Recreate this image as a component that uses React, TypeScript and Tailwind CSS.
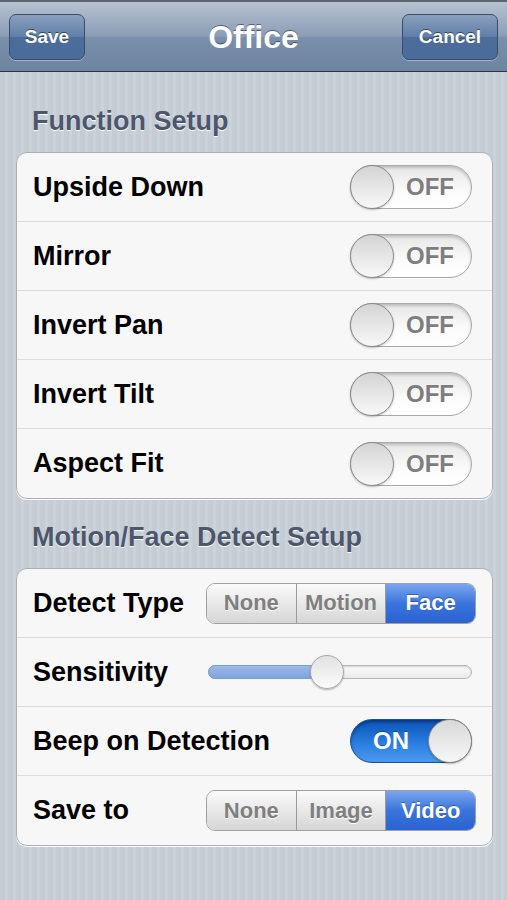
import React from "react";

const font = { fontFamily: '"Liberation Sans", Arial, sans-serif' };

const Toggle = ({ on }: { on: boolean }) =>
  on ? (
    <div className="relative w-[122px] h-[44px] rounded-full border border-[#1d4f96] bg-[linear-gradient(#0a52b8,#2a7ee0_55%,#4b9af0)] shadow-[inset_0_2px_3px_rgba(0,0,0,0.35)] flex items-center">
      <span className="ml-[22px] text-white font-bold text-[24px] leading-none [text-shadow:0_-1px_0_rgba(0,0,0,0.35)]">ON</span>
      <div className="absolute right-[-1px] top-[-1px] w-[44px] h-[44px] rounded-full border border-[#8a8a8a] bg-[linear-gradient(#d8d8d8,#f7f7f7)] shadow-[0_1px_2px_rgba(0,0,0,0.3)]" />
    </div>
  ) : (
    <div className="relative w-[122px] h-[44px] rounded-full border border-[#a9a9a9] bg-[linear-gradient(#e6e6e6,#fbfbfb_60%,#ffffff)] shadow-[inset_0_2px_3px_rgba(0,0,0,0.18)] flex items-center justify-end">
      <span className="mr-[17px] text-[#7d7d7d] font-bold text-[24px] leading-none [text-shadow:0_1px_0_#fff]">OFF</span>
      <div className="absolute left-[-1px] top-[-1px] w-[44px] h-[44px] rounded-full border border-[#8a8a8a] bg-[linear-gradient(#d4d4d4,#f8f8f8)] shadow-[0_1px_2px_rgba(0,0,0,0.25)]" />
    </div>
  );

const Segmented = ({ items, active }: { items: string[]; active: number }) => (
  <div className="flex w-[270px] h-[41px] rounded-[9px] border border-[#a0a0a0] overflow-hidden">
    {items.map((it, i) => (
      <div
        key={it}
        className={
          "flex-1 flex items-center justify-center font-bold text-[22px] leading-none " +
          (i > 0 ? "border-l border-[#9a9a9a] " : "") +
          (i === active
            ? "bg-[linear-gradient(#7aa6ee,#3a74dc_50%,#2a63d2)] text-white [text-shadow:0_-1px_0_rgba(0,0,0,0.3)]"
            : "bg-[linear-gradient(#fafafa,#e8e8e8_50%,#d6d6d6)] text-[#7f7f7f] [text-shadow:0_1px_0_#fff]")
        }
      >
        {it}
      </div>
    ))}
  </div>
);

const Row = ({ label, last, children }: { label: string; last?: boolean; children: React.ReactNode }) => (
  <div
    className={
      "h-[69px] flex items-center justify-between pl-[16px] pr-[20px] " +
      (last ? "" : "border-b border-[#dcdcdc]")
    }
  >
    <span className="text-[27px] leading-none font-bold text-black">{label}</span>
    {children}
  </div>
);

const Header = ({ text }: { text: string }) => (
  <div className="pl-[32px] text-[27px] leading-[30px] font-bold text-[#4c566c] [text-shadow:0_1px_0_#fff]">{text}</div>
);

const navBtn =
  "h-[46px] rounded-[7px] border border-[#394d6b] bg-[linear-gradient(#8aa0bd,#5f7ea8_50%,#4c6d9a_51%,#4a6c9b)] text-white font-bold text-[19px] leading-none [text-shadow:0_-1px_0_rgba(0,0,0,0.5)] shadow-[0_1px_0_rgba(255,255,255,0.35)]";

export default function App() {
  return (
    <div
      style={font}
      className="w-[507px] h-[900px] overflow-hidden bg-[repeating-linear-gradient(90deg,#c5ccd4_0px,#c5ccd4_5px,#cbd2d9_5px,#cbd2d9_8px)]"
    >
      <div className="h-[72px] border-t-2 border-[#5d6670] border-b border-b-[#2d3744] bg-[linear-gradient(#b7c2d1,#8a9cb5_50%,#7a8fab_51%,#6d83a1)] grid grid-cols-[1fr_auto_1fr] items-center px-[9px]">
        <div className="flex justify-start">
          <button className={navBtn + " w-[76px]"}>Save</button>
        </div>
        <span className="text-white font-bold text-[32px] leading-none [text-shadow:0_-1px_0_rgba(0,0,0,0.45)]">Office</span>
        <div className="flex justify-end">
          <button className={navBtn + " w-[96px]"}>Cancel</button>
        </div>
      </div>

      <div className="pt-[34px]">
        <Header text="Function Setup" />
        <div className="mx-[16px] mt-[16px] w-[477px] rounded-[11px] border border-[#a9b0b8] bg-[#f7f7f7] shadow-[0_1px_0_#fff]">
          <Row label="Upside Down"><Toggle on={false} /></Row>
          <Row label="Mirror"><Toggle on={false} /></Row>
          <Row label="Invert Pan"><Toggle on={false} /></Row>
          <Row label="Invert Tilt"><Toggle on={false} /></Row>
          <Row label="Aspect Fit" last><Toggle on={false} /></Row>
        </div>

        <div className="mt-[23px]">
          <Header text="Motion/Face Detect Setup" />
        </div>
        <div className="mx-[16px] mt-[16px] w-[477px] rounded-[11px] border border-[#a9b0b8] bg-[#f7f7f7] shadow-[0_1px_0_#fff]">
          <Row label="Detect Type">
            <div className="-mr-[4px]"><Segmented items={["None", "Motion", "Face"]} active={2} /></div>
          </Row>
          <Row label="Sensitivity">
            <div className="relative w-[264px] h-[34px] flex items-center">
              <div className="w-full h-[14px] rounded-full border border-[#b5b5b5] bg-[linear-gradient(#fafafa,#ececec)] shadow-[inset_0_1px_2px_rgba(0,0,0,0.15)]" />
              <div className="absolute left-0 top-[10px] w-[118px] h-[14px] rounded-l-full border border-[#7a9fd6] bg-[linear-gradient(#9ebbe8,#7ea3dd)]" />
              <div className="absolute left-[102px] top-0 w-[34px] h-[34px] rounded-full border border-[#a8a8a8] bg-[linear-gradient(#e2e2e2,#fbfbfb)] shadow-[0_1px_2px_rgba(0,0,0,0.3)]" />
            </div>
          </Row>
          <Row label="Beep on Detection"><Toggle on={true} /></Row>
          <Row label="Save to" last>
            <div className="-mr-[4px]"><Segmented items={["None", "Image", "Video"]} active={2} /></div>
          </Row>
        </div>
      </div>
    </div>
  );
}
